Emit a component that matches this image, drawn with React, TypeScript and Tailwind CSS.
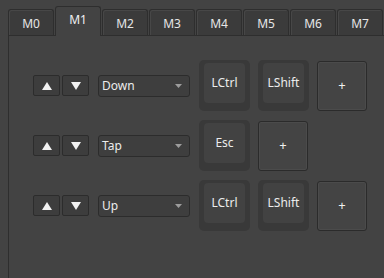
import { useState } from 'react';

const TABS = ['M0', 'M1', 'M2', 'M3', 'M4', 'M5', 'M6', 'M7'];

type Row = { action: string; keys: string[] };

const ROWS: Row[] = [
  { action: 'Down', keys: ['LCtrl', 'LShift'] },
  { action: 'Tap', keys: ['Esc'] },
  { action: 'Up', keys: ['LCtrl', 'LShift'] },
];

function Arrow({ down }: { down?: boolean }) {
  return (
    <svg width="10" height="8" viewBox="0 0 10 8">
      <polygon points={down ? '0,0 10,0 5,8' : '5,0 10,8 0,8'} fill="#f2f2f2" />
    </svg>
  );
}

function KeyCap({ label }: { label: string }) {
  return (
    <div className="w-[51px] h-[51px] bg-[#393939] rounded-[5px] pt-[3px] px-[5px]">
      <div className="w-[41px] h-[40px] bg-[#424242] rounded-[4px] flex items-center justify-center text-[12px] text-[#ececec]">
        {label}
      </div>
    </div>
  );
}

function AddButton() {
  return (
    <button className="w-[50px] h-[50px] bg-[#444444] border border-[#2b2b2b] rounded-[3px] shadow-[inset_0_0_0_1px_#4b4b4b] flex items-center justify-center text-[13px] text-[#f0f0f0]">
      +
    </button>
  );
}

export default function App() {
  const [active, setActive] = useState(1);

  return (
    <div
      className="w-[384px] h-[278px] bg-[#434343] overflow-hidden flex flex-col"
      style={{ fontFamily: '"Noto Sans", "Open Sans", sans-serif' }}
    >
      {/* Tab strip */}
      <div className="flex items-end pl-[8px] pt-[6px] gap-px relative z-10">
        {TABS.map((t, i) =>
          i === active ? (
            <button
              key={t}
              onClick={() => setActive(i)}
              className="w-[46px] h-[30px] -mb-px bg-[#434343] border border-b-0 border-[#2e2e2e] rounded-t-[3px] text-[12px] text-[#f0f0f0] pb-[3px] shrink-0"
            >
              {t}
            </button>
          ) : (
            <button
              key={t}
              onClick={() => setActive(i)}
              className="w-[46px] h-[26px] bg-[#3b3b3b] border border-b-0 border-[#2e2e2e] shadow-[inset_1px_1px_0_#474747] rounded-t-[3px] text-[12px] text-[#e6e6e6] pt-[2px] shrink-0"
            >
              {t}
            </button>
          )
        )}
      </div>

      {/* Panel */}
      <div className="ml-[8px] flex-1 border-t border-l border-[#2e2e2e] pt-6 pl-6 flex flex-col gap-[9px]">
        {ROWS.map((row, idx) => (
          <div key={idx} className="flex items-center h-[51px]">
            <div className="flex gap-[2px]">
              <button className="w-[27px] h-[21px] bg-[#3d3d3d] border border-[#2c2c2c] rounded-[2px] flex items-center justify-center">
                <Arrow />
              </button>
              <button className="w-[27px] h-[21px] bg-[#3d3d3d] border border-[#2c2c2c] rounded-[2px] flex items-center justify-center">
                <Arrow down />
              </button>
            </div>

            <div className="ml-[9px] w-[92px] h-[22px] bg-[#3e3e3e] border border-[#2c2c2c] rounded-[3px] flex items-center justify-between pl-[3px] pr-[7px] text-[12px] text-[#ececec]">
              <span>{row.action}</span>
              <svg width="7" height="4" viewBox="0 0 7 4">
                <polygon points="0,0 7,0 3.5,4" fill="#9c9c9c" />
              </svg>
            </div>

            <div className="ml-[9px] flex gap-[8px] items-center">
              {row.keys.map(k => (
                <KeyCap key={k} label={k} />
              ))}
              <AddButton />
            </div>
          </div>
        ))}
      </div>
    </div>
  );
}
